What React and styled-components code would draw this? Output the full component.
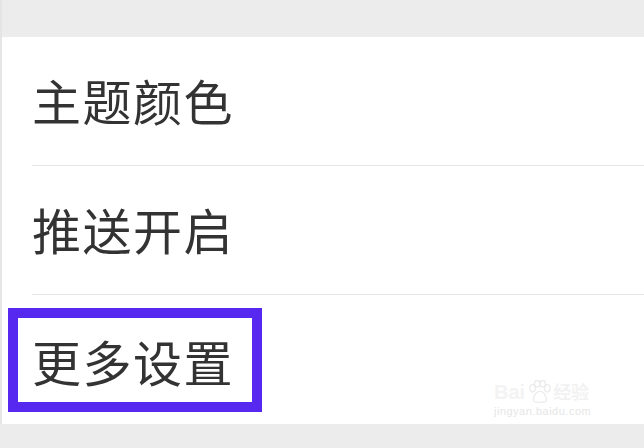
import React from 'react'
import styled, { createGlobalStyle } from 'styled-components'

const Global = createGlobalStyle`
  html, body { margin: 0; padding: 0; }
  body {
    width: 644px;
    height: 448px;
    overflow: hidden;
    background: #ededed;
    font-family: "Noto Sans CJK SC", "Noto Sans", sans-serif;
  }
`

const Page = styled.div`
  width: 644px;
  height: 448px;
  display: flex;
  flex-direction: column;
  background: #ededed;
  position: relative;
`

const TopBar = styled.div`
  height: 37px;
  flex-shrink: 0;
  background: #ececec;
  border-left: 2px solid #e4e4e4;
`

const List = styled.div`
  background: #fff;
  border-left: 2px solid #e6e6e6;
  display: flex;
  flex-direction: column;
`

const Row = styled.div`
  height: 129px;
  padding-left: 30px;
  position: relative;
  display: flex;
`

const RowInner = styled.div`
  flex: 1;
  display: flex;
  align-items: center;
  border-bottom: ${p => (p.last ? 'none' : '1px solid #e6e6e6')};
  box-sizing: border-box;
`

const Label = styled.span`
  font-size: 49px;
  letter-spacing: 1.5px;
  color: #333;
  line-height: 1;
  margin-top: ${p => p.shift || 0}px;
`

const Highlight = styled.div`
  position: absolute;
  left: 6px;
  top: 13px;
  width: 254px;
  height: 104px;
  box-sizing: border-box;
  border: 10px solid #5628f0;
  pointer-events: none;
`

const Bottom = styled.div`
  flex: 1;
  background: #ececec;
`

const Watermark = styled.div`
  position: absolute;
  left: 494px;
  top: 378px;
  font-family: "Liberation Sans", sans-serif;
  display: flex;
  flex-direction: column;
  align-items: flex-start;
  pointer-events: none;
`

const MarkTop = styled.div`
  display: flex;
  align-items: flex-end;
  gap: 2px;
  font-size: 20px;
  font-weight: bold;
  color: #f3f3f3;
`

const MarkCn = styled.span`
  font-family: "Noto Sans CJK SC", sans-serif;
  font-size: 18px;
  color: #f2f2f2;
`

const MarkUrl = styled.div`
  font-size: 11px;
  color: #e6e6e6;
  letter-spacing: 0.5px;
  margin-top: 1px;
`

const items = ['主题颜色', '推送开启', '更多设置']

export default function App() {
  return (
    <Page>
      <Global />
      <TopBar />
      <List>
        {items.map((t, i) => (
          <Row key={t}>
            <RowInner last={i === items.length - 1}>
              <Label shift={i === 2 ? 2 : -4}>{t}</Label>
            </RowInner>
            {i === items.length - 1 && <Highlight />}
          </Row>
        ))}
      </List>
      <Bottom />
      <Watermark>
        <MarkTop>
          <span>Bai</span>
          <svg width="24" height="24" viewBox="0 0 26 26" fill="none" stroke="#ececec" strokeWidth="1.5">
            <ellipse cx="6" cy="9" rx="3" ry="4" />
            <ellipse cx="11" cy="4" rx="3" ry="3.5" />
            <ellipse cx="17" cy="4" rx="3" ry="3.5" />
            <ellipse cx="22" cy="9" rx="3" ry="4" />
            <path d="M7 22c0-6 4-10 7-10s7 4 7 10c0 3-14 3-14 0z" />
          </svg>
          <MarkCn>经验</MarkCn>
        </MarkTop>
        <MarkUrl>jingyan.baidu.com</MarkUrl>
      </Watermark>
    </Page>
  )
}
